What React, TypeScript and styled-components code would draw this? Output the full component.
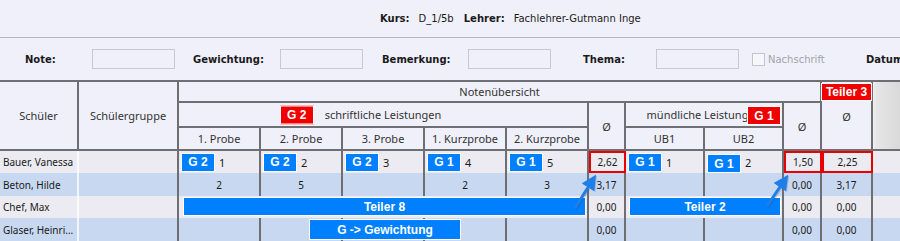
import React from "react";
import styled, { createGlobalStyle } from "styled-components";

const GlobalStyle = createGlobalStyle`
  html, body {
    margin: 0;
    padding: 0;
    background: #f0f0fa;
  }
  body {
    font-family: "DejaVu Sans", Verdana, sans-serif;
  }
`;

const COLS = "79px 100px 82px 82px 82px 82px 82px 37px 79px 79px 38px 51px 1fr";
const LINE = "#6f6f73";
const BLUE = "#0080ff";
const RED = "#f00000";

const Screen = styled.div`
  width: 900px;
  height: 241px;
  overflow: hidden;
  background: #f0f0fa;
  color: #1a1a1a;
`;

/*
  Kopfzeile
*/
const TopBar = styled.div`
  height: 37px;
  border-bottom: 1px solid #b6b6be;
  display: flex;
  align-items: center;
  padding-left: 380px;
  font-size: 10px;
`;

const InfoLabel = styled.span`
  font-weight: bold;
  margin-right: 9px;
`;

const InfoValue = styled.span`
  margin-right: 10px;
`;

const FilterBar = styled.div`
  height: 42px;
  display: flex;
  align-items: center;
  padding-left: 25px;
  font-size: 10px;
  white-space: nowrap;
`;

const FieldLabel = styled.span<{ $w: number; $ml?: number }>`
  flex-shrink: 0;
  width: ${(p) => p.$w}px;
  margin-left: ${(p) => p.$ml || 0}px;
  font-weight: bold;
`;

const TextBox = styled.input`
  flex-shrink: 0;
  width: 83px;
  height: 20px;
  margin: 0;
  padding: 0;
  box-sizing: border-box;
  border: 1px solid #c8c8d2;
  background: #f0f0fa;
  outline: none;
`;

const Check = styled.span`
  flex-shrink: 0;
  width: 13px;
  height: 13px;
  margin: 1px 3px 0 13px;
  box-sizing: border-box;
  border: 1px solid #c4c4cc;
  background: #f6f6fb;
`;

const CheckText = styled.span`
  width: 98px;
  flex-shrink: 0;
  color: #a2a2aa;
`;

/*
  Tabelle
*/
const TableWrap = styled.div`
  position: relative;
  border-top: 2px solid ${LINE};
  font-family: "Noto Sans", "Open Sans", sans-serif;
`;

const HeaderGrid = styled.div`
  display: grid;
  grid-template-columns: ${COLS};
  grid-template-rows: 21px 25px 23px;
  font-size: 11px;
  color: #333;
`;

const HeadCell = styled.div<{ $col: string; $row: string; $br?: boolean; $bb?: boolean; $open?: boolean }>`
  grid-column: ${(p) => p.$col};
  grid-row: ${(p) => p.$row};
  box-sizing: border-box;
  border-right: ${(p) => (p.$br ? `2px solid ${LINE}` : "none")};
  border-bottom: ${(p) => (p.$bb ? `2px solid ${LINE}` : "none")};
  display: flex;
  align-items: center;
  justify-content: center;
  position: relative;
  white-space: nowrap;
  overflow: ${(p) => (p.$open ? "visible" : "hidden")};
`;

const TeilerHead = styled(HeadCell)`
  flex-direction: column;
  justify-content: flex-start;
  align-items: stretch;
  overflow: visible;
`;

const Filler = styled(HeadCell)`
  background: linear-gradient(to right, #f2f2f2 0, #e6e6e6 3px, #d9d9d9 100%);
`;

const Caption = styled.span`
  position: relative;
`;

const Tag = styled.span<{ $color: string }>`
  box-sizing: border-box;
  display: inline-flex;
  align-items: center;
  justify-content: center;
  background: ${(p) => p.$color};
  border: 1px solid #fff;
  color: #fff;
  font-family: "Liberation Sans", Arial, sans-serif;
  font-weight: bold;
  font-size: 12px;
  white-space: nowrap;
`;

const LeadTag = styled(Tag)`
  position: absolute;
  right: calc(100% + 11px);
  top: 50%;
  transform: translateY(-50%);
  width: 34px;
  height: 19px;
`;

const TailTag = styled(Tag)`
  position: absolute;
  right: 1px;
  top: 3px;
  width: 34px;
  height: 19px;
`;

const TopTag = styled(Tag)`
  height: 18px;
  margin: 1px -1px 0 -1px;
`;

const AvgMark = styled.span`
  height: 30px;
  display: flex;
  align-items: center;
  justify-content: center;
`;

const Row = styled.div<{ $alt?: boolean }>`
  position: relative;
  display: grid;
  grid-template-columns: ${COLS};
  height: ${(p) => (p.$alt ? 23 : 22)}px;
  background: ${(p) => (p.$alt ? "#c8d8f1" : "#ebebf1")};
  font-size: 10px;
  color: #1a1a1a;
`;

const Cell = styled.div<{ $hl?: boolean; $center?: boolean }>`
  box-sizing: border-box;
  border-right: 2px solid ${LINE};
  ${(p) => (p.$hl ? `border: 2px solid #e80000;` : "")}
  display: flex;
  align-items: center;
  justify-content: ${(p) => (p.$center ? "center" : "flex-start")};
  padding-left: ${(p) => (p.$center ? 0 : 2)}px;
  white-space: nowrap;
  overflow: hidden;
`;

const NameCell = styled.div`
  box-sizing: border-box;
  border-right: 2px solid rgba(255, 255, 255, 0.75);
  display: flex;
  align-items: center;
  padding-left: 3px;
  white-space: nowrap;
  overflow: hidden;
`;

const GroupCell = styled.div`
  border-right: 2px solid ${LINE};
`;

const Empty = styled.div``;

const GradeTag = styled(Tag)<{ $drop?: number }>`
  width: 34px;
  height: 19px;
  margin-top: ${(p) => p.$drop || 0}px;
`;

const GradeValue = styled.span`
  margin-left: 4px;
  font-size: 11px;
`;

const SpanCell = styled.div<{ $col: string; $pl: number }>`
  grid-column: ${(p) => p.$col};
  box-sizing: border-box;
  border-right: 2px solid ${LINE};
  padding: 1px 1px 2px ${(p) => p.$pl}px;
  display: flex;
`;

const Bar = styled(Tag)`
  flex: 1;
  height: 19px;
`;

const FloatBar = styled(Tag)`
  position: absolute;
  left: 309px;
  top: 1px;
  width: 152px;
  height: 21px;
`;

const ArrowLayer = styled.svg`
  position: absolute;
  left: 0;
  top: -2px;
  pointer-events: none;
`;

interface Grade {
  tag?: "G 1" | "G 2";
  value?: string;
  drop?: number;
}

interface Student {
  name: string;
  grades: Grade[];
  avgWritten: string;
  oral: Grade[];
  avgOral: string;
  total: string;
  hl?: boolean;
}

const students: Student[] = [
  {
    name: "Bauer, Vanessa",
    grades: [
      { tag: "G 2", value: "1" },
      { tag: "G 2", value: "2" },
      { tag: "G 2", value: "3" },
      { tag: "G 1", value: "4" },
      { tag: "G 1", value: "5" },
    ],
    avgWritten: "2,62",
    oral: [
      { tag: "G 1", value: "1" },
      { tag: "G 1", value: "2", drop: 3 },
    ],
    avgOral: "1,50",
    total: "2,25",
    hl: true,
  },
  {
    name: "Beton, Hilde",
    grades: [{ value: "2" }, { value: "5" }, {}, { value: "2" }, { value: "3" }],
    avgWritten: "3,17",
    oral: [{}, {}],
    avgOral: "0,00",
    total: "3,17",
  },
  {
    name: "Chef, Max",
    grades: [],
    avgWritten: "0,00",
    oral: [],
    avgOral: "0,00",
    total: "0,00",
  },
  {
    name: "Glaser, Heinri...",
    grades: [{}, {}, {}, {}, {}],
    avgWritten: "0,00",
    oral: [{}, {}],
    avgOral: "0,00",
    total: "0,00",
  },
];

const GradeCell: React.FC<{ g: Grade }> = ({ g }) =>
  g.tag ? (
    <Cell>
      <GradeTag $color={BLUE} $drop={g.drop}>
        {g.tag}
      </GradeTag>
      <GradeValue>{g.value}</GradeValue>
    </Cell>
  ) : (
    <Cell $center>{g.value}</Cell>
  );

const StudentRow: React.FC<{ s: Student; alt: boolean; index: number }> = ({ s, alt, index }) => (
  <Row $alt={alt}>
    <NameCell>{s.name}</NameCell>
    <GroupCell />
    {index === 2 ? (
      <SpanCell $col="3 / 8" $pl={4}>
        <Bar $color={BLUE}>Teiler 8</Bar>
      </SpanCell>
    ) : (
      s.grades.map((g, i) => <GradeCell key={i} g={g} />)
    )}
    <Cell $center $hl={s.hl}>
      {s.avgWritten}
    </Cell>
    {index === 2 ? (
      <SpanCell $col="9 / 11" $pl={3}>
        <Bar $color={BLUE}>Teiler 2</Bar>
      </SpanCell>
    ) : (
      s.oral.map((g, i) => <GradeCell key={i} g={g} />)
    )}
    <Cell $center $hl={s.hl}>
      {s.avgOral}
    </Cell>
    <Cell $center $hl={s.hl}>
      {s.total}
    </Cell>
    <Empty />
    {index === 3 ? <FloatBar $color={BLUE}>G -&gt; Gewichtung</FloatBar> : null}
  </Row>
);

const Arrow: React.FC<{ x1: number; y1: number; x2: number; y2: number }> = ({ x1, y1, x2, y2 }) => (
  <g>
    <line x1={x1 + 1} y1={y1 + 1} x2={x2 + 1} y2={y2 + 1} stroke="rgba(60,60,90,0.22)" strokeWidth={3} markerEnd="url(#headShade)" />
    <line x1={x1} y1={y1} x2={x2} y2={y2} stroke="#1f7fe8" strokeWidth={3} markerEnd="url(#head)" />
  </g>
);

const subHeads = ["1. Probe", "2. Probe", "3. Probe", "1. Kurzprobe", "2. Kurzprobe"];

const App: React.FC = () => (
  <Screen>
    <GlobalStyle />
    <TopBar>
      <InfoLabel>Kurs:</InfoLabel>
      <InfoValue>D_1/5b</InfoValue>
      <InfoLabel>Lehrer:</InfoLabel>
      <InfoValue>Fachlehrer-Gutmann Inge</InfoValue>
    </TopBar>

    <FilterBar>
      <FieldLabel $w={67}>Note:</FieldLabel>
      <TextBox readOnly />
      <FieldLabel $w={87} $ml={18}>
        Gewichtung:
      </FieldLabel>
      <TextBox readOnly />
      <FieldLabel $w={86} $ml={19}>
        Bemerkung:
      </FieldLabel>
      <TextBox readOnly />
      <FieldLabel $w={73} $ml={32}>
        Thema:
      </FieldLabel>
      <TextBox readOnly />
      <Check />
      <CheckText>Nachschrift</CheckText>
      <FieldLabel $w={60}>Datum:</FieldLabel>
    </FilterBar>

    <TableWrap>
      <HeaderGrid>
        <HeadCell $col="1" $row="1 / 4" $br $bb>
          Schüler
        </HeadCell>
        <HeadCell $col="2" $row="1 / 4" $br $bb>
          Schülergruppe
        </HeadCell>
        <HeadCell $col="3 / 12" $row="1" $br $bb>
          Notenübersicht
        </HeadCell>
        <TeilerHead $col="12" $row="1 / 4" $br $bb>
          <TopTag $color={RED}>Teiler 3</TopTag>
          <AvgMark>Ø</AvgMark>
        </TeilerHead>
        <Filler $col="13" $row="1 / 4" $bb />

        <HeadCell $col="3 / 8" $row="2" $br $bb $open>
          <Caption>
            <LeadTag $color={RED}>G 2</LeadTag>
            schriftliche Leistungen
          </Caption>
        </HeadCell>
        <HeadCell $col="8" $row="2 / 4" $br $bb>
          Ø
        </HeadCell>
        <HeadCell $col="9 / 11" $row="2" $br $bb>
          mündliche Leistungen
          <TailTag $color={RED}>G 1</TailTag>
        </HeadCell>
        <HeadCell $col="11" $row="2 / 4" $br $bb>
          Ø
        </HeadCell>

        {subHeads.map((h, i) => (
          <HeadCell key={h} $col={String(i + 3)} $row="3" $br $bb>
            {h}
          </HeadCell>
        ))}
        <HeadCell $col="9" $row="3" $br $bb>
          UB1
        </HeadCell>
        <HeadCell $col="10" $row="3" $br $bb>
          UB2
        </HeadCell>
      </HeaderGrid>

      {students.map((s, i) => (
        <StudentRow key={s.name} s={s} alt={i % 2 === 1} index={i} />
      ))}

      <ArrowLayer width={900} height={163} viewBox="0 0 900 163">
        <defs>
          <marker id="head" viewBox="0 0 10 10" refX="5" refY="5" markerWidth="5" markerHeight="5" orient="auto">
            <path d="M0,0 L10,5 L0,10 z" fill="#1f7fe8" />
          </marker>
          <marker id="headShade" viewBox="0 0 10 10" refX="5" refY="5" markerWidth="5" markerHeight="5" orient="auto">
            <path d="M0,0 L10,5 L0,10 z" fill="rgba(60,60,90,0.22)" />
          </marker>
        </defs>
        <Arrow x1={575} y1={128} x2={592} y2={101} />
        <Arrow x1={767} y1={126} x2={784} y2={101} />
      </ArrowLayer>
    </TableWrap>
  </Screen>
);

export default App;
